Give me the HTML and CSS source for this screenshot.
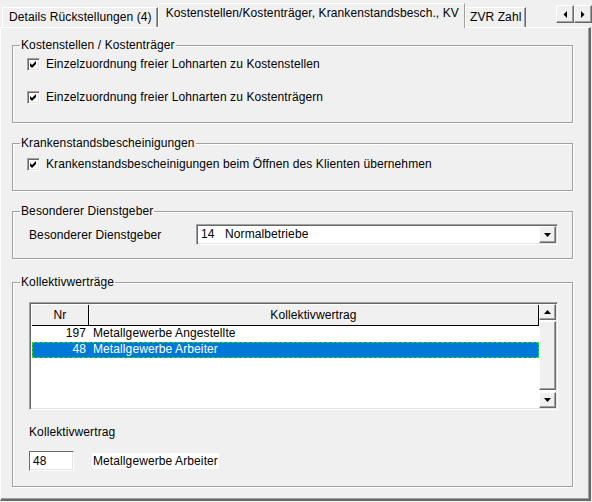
FILE: index.html
```html
<!DOCTYPE html>
<html lang="de">
<head>
    <meta charset="UTF-8">
    <title>Mandant - Einstellungen</title>
    <link rel="stylesheet" href="styles.css">
</head>
<body>

    <div class="tabbar">
        <div class="tab">Details Rückstellungen (4)</div>
        <div class="tab active">Kostenstellen/Kostenträger, Krankenstandsbesch., KV</div>
        <div class="tab tab-zvr">ZVR Zahl</div>
        <div class="tab-scroll">
            <span class="btn3d arrow-btn">
                <svg width="4" height="7" viewBox="0 0 4 7"><path d="M4 0 L4 7 L0.5 3.5 Z" fill="#000"/></svg>
            </span>
            <span class="btn3d arrow-btn">
                <svg width="4" height="7" viewBox="0 0 4 7"><path d="M0 0 L0 7 L3.5 3.5 Z" fill="#000"/></svg>
            </span>
        </div>
    </div>

    <div class="panel">

        <fieldset class="group">
            <legend>Kostenstellen / Kostenträger</legend>
            <div class="group-body body-kosten">
                <div class="check-row">
                    <span class="checkbox"><svg width="9" height="9" viewBox="0 0 9 9"><path d="M1 3 L3 5 L7 1 L7 4 L3 8 L1 6 Z" fill="#000"/></svg></span>
                    <span>Einzelzuordnung freier Lohnarten zu Kostenstellen</span>
                </div>
                <div class="check-row">
                    <span class="checkbox"><svg width="9" height="9" viewBox="0 0 9 9"><path d="M1 3 L3 5 L7 1 L7 4 L3 8 L1 6 Z" fill="#000"/></svg></span>
                    <span>Einzelzuordnung freier Lohnarten zu Kostenträgern</span>
                </div>
            </div>
        </fieldset>

        <fieldset class="group">
            <legend>Krankenstandsbescheinigungen</legend>
            <div class="group-body body-krank">
                <div class="check-row">
                    <span class="checkbox"><svg width="9" height="9" viewBox="0 0 9 9"><path d="M1 3 L3 5 L7 1 L7 4 L3 8 L1 6 Z" fill="#000"/></svg></span>
                    <span>Krankenstandsbescheinigungen beim Öffnen des Klienten übernehmen</span>
                </div>
            </div>
        </fieldset>

        <fieldset class="group group-dg">
            <legend>Besonderer Dienstgeber</legend>
            <div class="group-body body-dg">
                <span class="field-label">Besonderer Dienstgeber</span>
                <div class="combo">
                    <span class="combo-text"><span class="combo-nr">14</span>Normalbetriebe</span>
                    <span class="btn3d combo-btn">
                        <svg width="7" height="4" viewBox="0 0 7 4"><path d="M0 0 L7 0 L3.5 4 Z" fill="#000"/></svg>
                    </span>
                </div>
            </div>
        </fieldset>

        <fieldset class="group group-kv">
            <legend>Kollektivwerträge</legend>
            <div class="group-body body-kv">

                <div class="listview">
                    <div class="list-main">
                        <div class="list-header">
                            <div class="col-nr">Nr</div>
                            <div class="col-name">Kollektivwertrag</div>
                        </div>
                        <div class="list-row">
                            <div class="col-nr">197</div>
                            <div class="col-name">Metallgewerbe Angestellte</div>
                        </div>
                        <div class="list-row selected">
                            <div class="col-nr">48</div>
                            <div class="col-name">Metallgewerbe Arbeiter</div>
                        </div>
                    </div>
                    <div class="vscroll">
                        <span class="btn3d scroll-btn">
                            <svg width="7" height="4" viewBox="0 0 7 4"><path d="M0 4 L7 4 L3.5 0 Z" fill="#000"/></svg>
                        </span>
                        <span class="btn3d scroll-thumb"></span>
                        <span class="btn3d scroll-btn">
                            <svg width="7" height="4" viewBox="0 0 7 4"><path d="M0 0 L7 0 L3.5 4 Z" fill="#000"/></svg>
                        </span>
                    </div>
                </div>

                <div class="kv-label">Kollektivwertrag</div>
                <div class="kv-row">
                    <span class="textbox">48</span>
                    <span class="kv-name">Metallgewerbe Arbeiter</span>
                </div>

            </div>
        </fieldset>

    </div>

</body>
</html>
```

FILE: styles.css
```css
* {
    box-sizing: border-box;
}

body {
    margin: 0;
    width: 592px;
    height: 502px;
    overflow: hidden;
    background-color: #f0f0f0;
    font-family: "Liberation Sans", Arial, sans-serif;
    font-size: 12px;
    letter-spacing: 0.1px;
    color: #000;
}

/* raised 3d look used by buttons */
.btn3d {
    display: flex;
    align-items: center;
    justify-content: center;
    background-color: #f0f0f0;
    border: 1px solid;
    border-color: #fff #696969 #696969 #fff;
    box-shadow: inset -1px -1px 0 #a0a0a0;
}

/* tabs */
.tabbar {
    display: flex;
    align-items: flex-end;
    height: 27px;
    padding-left: 2px;
}

.tab {
    height: 20px;
    padding: 0 5px 0 6px;
    line-height: 19px;
    white-space: nowrap;
    border: 1px solid #fff;
    border-bottom: none;
    border-right-color: #696969;
    box-shadow: inset -1px 0 0 #a0a0a0;
}

.tab.active {
    position: relative;
    z-index: 1;
    height: 25px;
    margin-bottom: -1px;
    padding: 0 5px 0 7px;
    line-height: 19px;
    background-color: #f0f0f0;
    border-right-color: #a0a0a0;
    box-shadow: none;
}

.tab.tab-zvr {
    padding: 0 4px;
}

.tab-scroll {
    display: flex;
    align-self: flex-start;
    margin: 5px 0 0 auto;
}

.arrow-btn {
    width: 18px;
    height: 18px;
}

/* page */
.panel {
    width: 591px;
    height: 474px;
    padding: 10px 0 0 11px;
    border-top: 1px solid #fff;
    border-left: 1px solid #fff;
    border-right: 2px solid #696969;
    border-bottom: 2px solid #696969;
    box-shadow: inset -1px -1px 0 #a0a0a0;
}

.group {
    width: 561px;
    min-width: 0;
    margin: 0 0 13px 0;
    padding: 0;
    border: 1px solid #a0a0a0;
    box-shadow: 1px 1px 0 #fff, inset 1px 1px 0 #fff;
}

.group legend {
    margin-left: 7px;
    padding: 0 1px;
    line-height: 14px;
}

.group-body {
    padding-left: 14px;
}

.check-row {
    display: flex;
    align-items: center;
    height: 16px;
    gap: 6px;
}

.checkbox {
    display: flex;
    align-items: center;
    justify-content: center;
    width: 13px;
    height: 13px;
    background-color: #fff;
    border: 1px solid;
    border-color: #a0a0a0 #fff #fff #a0a0a0;
    box-shadow: inset 1px 1px 0 #696969, inset -1px -1px 0 #e3e3e3;
}

.body-kosten {
    display: flex;
    flex-direction: column;
    gap: 17px;
    padding-top: 4px;
    padding-bottom: 17px;
}

.body-krank {
    padding-top: 6px;
    padding-bottom: 18px;
}

.group-dg {
    margin-bottom: 16px;
}

.body-dg {
    display: flex;
    align-items: center;
    padding: 6px 0 13px 16px;
}

.field-label {
    width: 167px;
}

.combo {
    display: flex;
    width: 362px;
    height: 21px;
    padding: 1px;
    background-color: #fff;
    border: 1px solid;
    border-color: #a0a0a0 #fff #fff #a0a0a0;
    box-shadow: inset 1px 1px 0 #696969, inset -1px -1px 0 #e3e3e3;
}

.combo-text {
    flex: 1;
    padding-left: 3px;
    line-height: 17px;
}

.combo-nr {
    display: inline-block;
    width: 24px;
}

.combo-btn {
    width: 17px;
    height: 17px;
}

/* list of collective agreements */
.group-kv {
    margin-bottom: 0;
}

.body-kv {
    padding: 13px 0 15px 16px;
}

.listview {
    display: flex;
    width: 529px;
    height: 108px;
    padding: 1px 1px 1px 2px;
    background-color: #fff;
    border: 1px solid;
    border-color: #a0a0a0 #fff #fff #a0a0a0;
    box-shadow: inset 1px 1px 0 #696969, inset -1px -1px 0 #e3e3e3;
}

.list-main {
    flex: 1;
}

.list-header {
    display: flex;
    height: 22px;
    line-height: 21px;
    background-color: #f0f0f0;
    border-top: 1px solid #fff;
    border-bottom: 1px solid #000;
}

.list-header .col-nr {
    text-align: center;
    border-right: 1px solid #000;
    box-shadow: 1px 0 0 #fff;
}

.list-header .col-name {
    flex: 1;
    text-align: center;
    border-right: 1px solid #000;
}

.col-nr {
    width: 57px;
}

.list-row {
    display: flex;
    height: 16px;
    line-height: 15px;
}

.list-row .col-nr {
    text-align: right;
    padding-right: 3px;
}

.list-row .col-name {
    padding-left: 4px;
}

.list-row.selected {
    background-color: #0078d7;
    color: #fff;
    outline: 1px dashed #22e022;
    outline-offset: -1px;
}

.vscroll {
    display: flex;
    flex-direction: column;
    width: 17px;
}

.scroll-btn {
    height: 16px;
}

.scroll-thumb {
    flex: 1;
    margin: 1px 0 2px;
}

.kv-label {
    margin-top: 15px;
    line-height: 14px;
}

.kv-row {
    display: flex;
    align-items: center;
    gap: 18px;
    margin-top: 12px;
}

.textbox {
    width: 45px;
    height: 20px;
    padding-left: 3px;
    line-height: 18px;
    background-color: #fff;
    border: 1px solid;
    border-color: #696969 #fff #fff #696969;
    box-shadow: inset -1px -1px 0 #e3e3e3;
}

.kv-name {
    padding: 1px 1px 0;
    line-height: 15px;
    background-color: #fff;
}
```
